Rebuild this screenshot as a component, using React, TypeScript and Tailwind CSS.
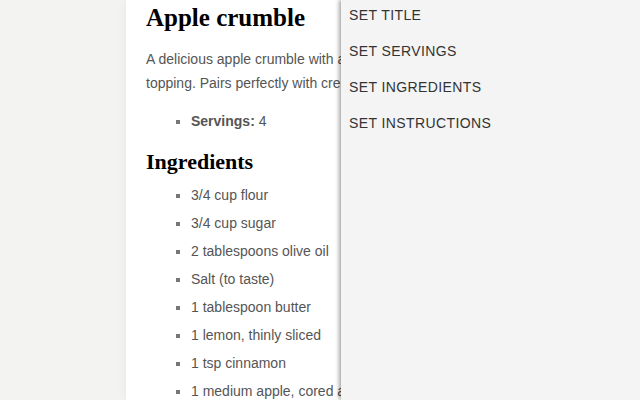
export default function App() {
  const ingredients = [
    '3/4 cup flour',
    '3/4 cup sugar',
    '2 tablespoons olive oil',
    'Salt (to taste)',
    '1 tablespoon butter',
    '1 lemon, thinly sliced',
    '1 tsp cinnamon',
    '1 medium apple, cored and sliced',
  ]
  const actions = ['Set title', 'Set servings', 'Set ingredients', 'Set instructions']

  return (
    <div className="relative h-[400px] w-[640px] overflow-hidden bg-[#f3f4f1] font-['Liberation_Sans',Arial,sans-serif]">
      {/* recipe card */}
      <div className="mx-auto h-full w-[388px] bg-white px-5 shadow-[0_0_10px_rgba(0,0,0,0.06)]">
        <h1 className="pt-[2px] font-['Liberation_Serif','Times_New_Roman',serif] text-[25px] leading-[32px] font-bold text-black">
          Apple crumble
        </h1>
        <p className="mt-[13px] text-[14px] leading-[24px] text-[#555]">
          A delicious apple crumble with a crisp, buttery oat topping. Pairs perfectly with cream or ice cream.
        </p>
        <ul className="mt-[16px] list-[square] pl-[45px] text-[14px] leading-[20px] text-[#555] marker:text-[#777]">
          <li>
            <b className="font-bold">Servings:</b> 4
          </li>
        </ul>
        <h2 className="mt-[18px] font-['Liberation_Serif','Times_New_Roman',serif] text-[22px] leading-[26px] font-bold text-black">
          Ingredients
        </h2>
        <ul className="mt-[10px] flex list-[square] flex-col gap-[8px] pl-[45px] text-[14px] leading-[20px] text-[#555] marker:text-[#777]">
          {ingredients.map(i => (
            <li key={i} className="whitespace-nowrap">{i}</li>
          ))}
        </ul>
      </div>

      {/* action drawer */}
      <div className="absolute top-0 right-0 bottom-0 w-[299px] bg-[#f4f4f4] shadow-[-2px_0_4px_rgba(0,0,0,0.35)]">
        <div className="-mt-[3px] flex flex-col">
          {actions.map(a => (
            <button
              key={a}
              className="h-[36px] px-2 text-left text-[14px] tracking-[0.4px] text-[#333] uppercase"
            >
              {a}
            </button>
          ))}
        </div>
      </div>
    </div>
  )
}
